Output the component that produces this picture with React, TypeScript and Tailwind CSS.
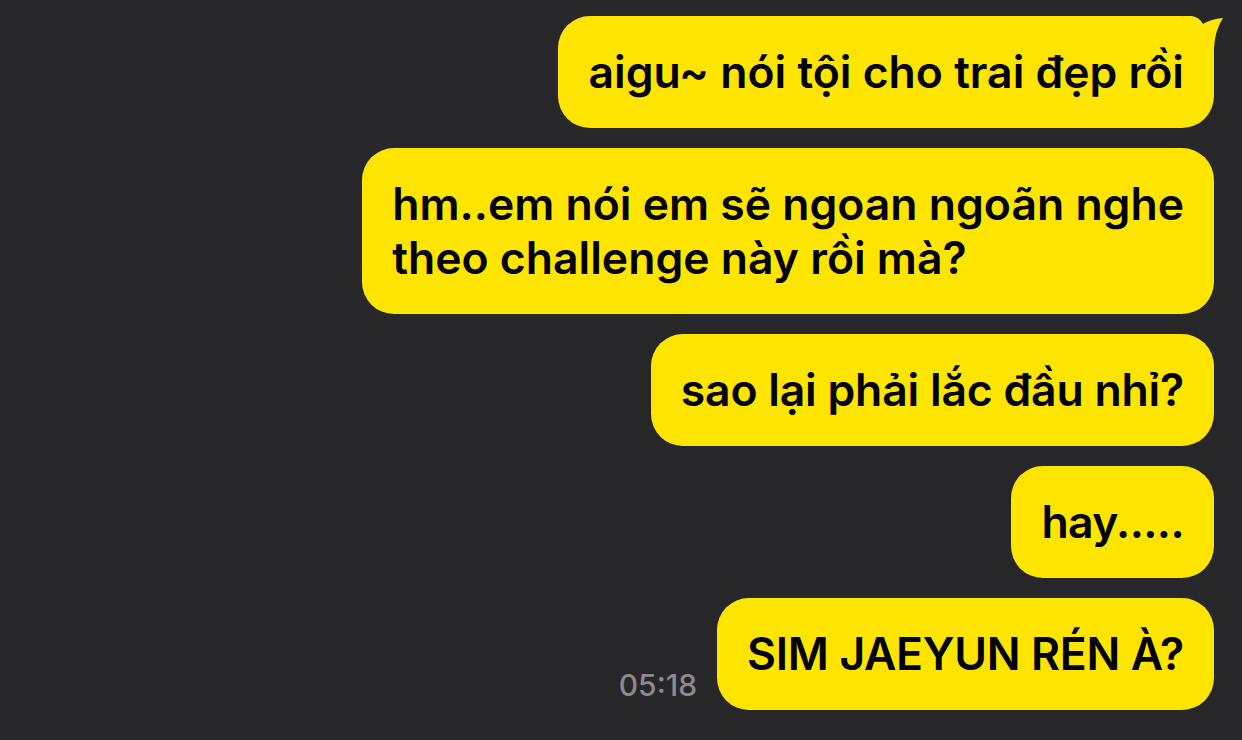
import React from "react";

const bubble =
  "relative bg-[#fee500] text-black rounded-[32px] px-[30px] py-[29px] leading-[54px] text-[44.5px] font-semibold whitespace-nowrap";

export default function App() {
  return (
    <div
      className="w-[1242px] h-[740px] bg-[#272729] overflow-hidden flex flex-col items-end gap-[20px] pt-[16px] pr-[28px]"
      style={{ fontFamily: "Inter, 'Noto Sans', sans-serif" }}
    >
      <div className={bubble}>
        aigu~ nói tội cho trai đẹp rồi
        <svg
          className="absolute right-[-10px] top-0"
          width="40"
          height="44"
          viewBox="0 0 40 44"
        >
          <path
            d="M0 0 L8 0 Q15 1 19 8 Q27 3 39 2 Q31 14 30 32 L30 44 L0 44 Z"
            fill="#fee500"
          />
        </svg>
      </div>
      <div className={bubble}>
        hm..em nói em sẽ ngoan ngoãn nghe
        <br />
        theo challenge này rồi mà?
      </div>
      <div className={`${bubble} tracking-[-0.2px]`}>sao lại phải lắc đầu nhỉ?</div>
      <div className={`${bubble} tracking-[-0.6px]`}>hay.....</div>
      <div className="flex items-end gap-[20px]">
        <div className="text-[#8b8b8f] text-[30px] font-medium leading-none mb-[10px]">05:18</div>
        <div className={`${bubble} tracking-[-0.3px]`}>SIM JAEYUN RÉN À?</div>
      </div>
    </div>
  );
}
